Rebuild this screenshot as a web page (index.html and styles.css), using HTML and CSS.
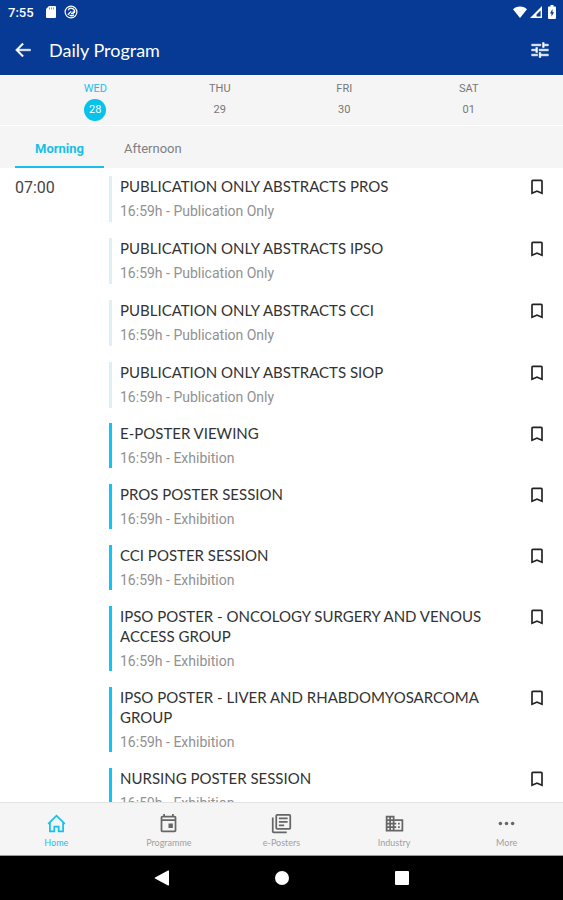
FILE: index.html
```html
<!DOCTYPE html>
<html lang="en">
<head>
  <meta charset="UTF-8" />
  <meta name="viewport" content="width=device-width, initial-scale=1.0"/>
  <title>Daily Program</title>
  <link rel="stylesheet" href="styles.css">
</head>
<body>

  <!-- shared bookmark icon -->
  <svg class="defs" aria-hidden="true">
    <symbol id="bookmark" viewBox="0 0 24 24">
      <path fill="currentColor" d="M17 3H7c-1.100 0-2 .9-2 2v16l7-3 7 3V5c0-1.100-.9-2-2-2zm0 15l-5-2.180L7 18V5h10v13z"/>
    </symbol>
  </svg>

  <header class="header">
    <div class="status-bar">
      <span class="clock">7:55</span>
      <svg class="status-icon" viewBox="0 0 14 14"><path fill="#fff" d="M5 1h6a1 1 0 0 1 1 1v10a1 1 0 0 1-1 1H3a1 1 0 0 1-1-1V4z"/><path stroke="#063a94" stroke-width="1" d="M5.500 2.500v2M7.500 2.500v2M9.500 2.500v2" opacity=".5"/></svg>
      <svg class="status-icon" viewBox="0 0 14 14" fill="none" stroke="#fff"><circle cx="7" cy="7" r="5.900" stroke-width="1.200"/><path stroke-width="1.300" d="M3.800 9.800l3.400-3.400M4.200 5.200A3.300 3.300 0 0 1 10.200 8M10 10A4 4 0 0 1 5.500 10M7 8.500h2.200V6.200"/></svg>
      <span class="spacer"></span>
      <svg class="status-icon" viewBox="0 0 14 14"><path fill="#fff" d="M7 13L0 4.300C1.500 2.800 4 1.600 7 1.600s5.500 1.200 7 2.700z"/></svg>
      <svg class="status-icon" viewBox="0 0 14 14"><path fill="#fff" fill-rule="evenodd" d="M13 1v12H1zM11.600 5.500L7.500 9.500v2h4.100z"/></svg>
      <svg class="status-icon" viewBox="0 0 14 14"><path fill="#fff" fill-rule="evenodd" d="M5.500 0h3v1.500H10a1 1 0 0 1 1 1V13a1 1 0 0 1-1 1H4a1 1 0 0 1-1-1V2.500a1 1 0 0 1 1-1h1.500zM7.500 4L5 8.500h1.500V11.500L9 7.200H7.500z"/></svg>
    </div>
    <div class="app-bar">
      <button class="icon-btn" aria-label="Back">
        <svg class="icon" viewBox="0 0 24 24"><path fill="currentColor" stroke="currentColor" stroke-width=".5" d="M21 11H6.830l5.890-5.890L11.300 3.700l-8.300 8.300 8.300 8.300 1.410-1.410L6.830 13H21v-2z"/></svg>
      </button>
      <h1 class="title">Daily Program</h1>
      <button class="icon-btn" aria-label="Filter">
        <svg class="icon" viewBox="0 0 24 24"><path fill="currentColor" stroke="currentColor" stroke-width=".6" d="M2 17v2h7v-2H2zM2 5v2h11V5H2zm11 16v-2h9v-2h-9v-2h-2v6h2zM7 9v2H2v2h5v2h2V9H7zm15 4v-2H11v2h11zm-7-4h2V7h5V5h-5V3h-2v6z"/></svg>
      </button>
    </div>
  </header>

  <div class="days">
    <button class="day active">WED <span class="date">28</span></button>
    <button class="day">THU <span class="date">29</span></button>
    <button class="day">FRI <span class="date">30</span></button>
    <button class="day">SAT <span class="date">01</span></button>
  </div>

  <div class="tabs">
    <button class="tab active">Morning</button>
    <button class="tab">Afternoon</button>
  </div>

  <main class="schedule">
    <div class="time">07:00</div>
    <div class="sessions">
      <div class="group publication">
        <div class="session">
          <div class="info"><h2>PUBLICATION ONLY ABSTRACTS PROS</h2><p>16:59h - Publication Only</p></div>
          <button class="bookmark" aria-label="Bookmark"><svg class="icon"><use href="#bookmark"/></svg></button>
        </div>
        <div class="session">
          <div class="info"><h2>PUBLICATION ONLY ABSTRACTS IPSO</h2><p>16:59h - Publication Only</p></div>
          <button class="bookmark" aria-label="Bookmark"><svg class="icon"><use href="#bookmark"/></svg></button>
        </div>
        <div class="session">
          <div class="info"><h2>PUBLICATION ONLY ABSTRACTS CCI</h2><p>16:59h - Publication Only</p></div>
          <button class="bookmark" aria-label="Bookmark"><svg class="icon"><use href="#bookmark"/></svg></button>
        </div>
        <div class="session">
          <div class="info"><h2>PUBLICATION ONLY ABSTRACTS SIOP</h2><p>16:59h - Publication Only</p></div>
          <button class="bookmark" aria-label="Bookmark"><svg class="icon"><use href="#bookmark"/></svg></button>
        </div>
      </div>
      <div class="group exhibition">
        <div class="session">
          <div class="info"><h2>E-POSTER VIEWING</h2><p>16:59h - Exhibition</p></div>
          <button class="bookmark" aria-label="Bookmark"><svg class="icon"><use href="#bookmark"/></svg></button>
        </div>
        <div class="session">
          <div class="info"><h2>PROS POSTER SESSION</h2><p>16:59h - Exhibition</p></div>
          <button class="bookmark" aria-label="Bookmark"><svg class="icon"><use href="#bookmark"/></svg></button>
        </div>
        <div class="session">
          <div class="info"><h2>CCI POSTER SESSION</h2><p>16:59h - Exhibition</p></div>
          <button class="bookmark" aria-label="Bookmark"><svg class="icon"><use href="#bookmark"/></svg></button>
        </div>
        <div class="session">
          <div class="info"><h2>IPSO POSTER - ONCOLOGY SURGERY AND VENOUS ACCESS GROUP</h2><p>16:59h - Exhibition</p></div>
          <button class="bookmark" aria-label="Bookmark"><svg class="icon"><use href="#bookmark"/></svg></button>
        </div>
        <div class="session">
          <div class="info"><h2>IPSO POSTER - LIVER AND RHABDOMYOSARCOMA GROUP</h2><p>16:59h - Exhibition</p></div>
          <button class="bookmark" aria-label="Bookmark"><svg class="icon"><use href="#bookmark"/></svg></button>
        </div>
        <div class="session">
          <div class="info"><h2>NURSING POSTER SESSION</h2><p>16:59h - Exhibition</p></div>
          <button class="bookmark" aria-label="Bookmark"><svg class="icon"><use href="#bookmark"/></svg></button>
        </div>
      </div>
    </div>
  </main>

  <nav class="bottom-nav">
    <a class="nav-item active" href="#home">
      <svg class="nav-icon" viewBox="0 0 24 24" fill="none" stroke="currentColor" stroke-width="2"><path d="M2.500 12.500L12 3l9.500 9.500M4.500 11v10h5v-5.500h5V21h5V11"/></svg>
      Home
    </a>
    <a class="nav-item" href="#programme">
      <svg class="nav-icon" viewBox="0 0 24 24"><path fill="currentColor" d="M19 3h-1V1h-2v2H8V1H6v2H5c-1.100 0-2 .9-2 2v15c0 1.100.9 2 2 2h14c1.100 0 2-.9 2-2V5c0-1.100-.9-2-2-2zm0 17H5V9h14v11zm0-13H5V5h14v2zm-7 5h5v5h-5z"/></svg>
      Programme
    </a>
    <a class="nav-item" href="#posters">
      <svg class="nav-icon" viewBox="0 0 24 24" fill="none" stroke="currentColor" stroke-width="2"><rect x="6" y="2" width="16" height="16" rx="1"/><path d="M9 6h10M9 10h10M9 14h6M2 5v16a1 1 0 0 0 1 1h15"/></svg>
      e-Posters
    </a>
    <a class="nav-item" href="#industry">
      <svg class="nav-icon" viewBox="0 0 24 24"><path fill="currentColor" d="M12 7V3H2v18h20V7H12zM6 19H4v-2h2v2zm0-4H4v-2h2v2zm0-4H4V9h2v2zm0-4H4V5h2v2zm4 12H8v-2h2v2zm0-4H8v-2h2v2zm0-4H8V9h2v2zm0-4H8V5h2v2zm10 12h-8v-2h2v-2h-2v-2h2v-2h-2V9h8v10zm-2-8h-2v2h2v-2zm0 4h-2v2h2v-2z"/></svg>
      Industry
    </a>
    <a class="nav-item" href="#more">
      <svg class="nav-icon" viewBox="0 0 24 24" fill="currentColor"><circle cx="5" cy="12" r="2"/><circle cx="12" cy="12" r="2"/><circle cx="19" cy="12" r="2"/></svg>
      More
    </a>
  </nav>

  <div class="system-nav">
    <button class="system-btn" aria-label="System back"><svg viewBox="0 0 16 16"><path fill="#fff" d="M15 1v14a.6.6 0 0 1-1 .4L1 8.600a.7.7 0 0 1 0-1.200L14 .6a.6.6 0 0 1 1 .4z"/></svg></button>
    <button class="system-btn" aria-label="System home"><svg viewBox="0 0 16 16"><circle cx="8" cy="8" r="7" fill="#fff"/></svg></button>
    <button class="system-btn" aria-label="Recent apps"><svg viewBox="0 0 16 16"><rect x="1" y="1" width="14" height="14" rx="1" fill="#fff"/></svg></button>
  </div>

</body>
</html>
```
FILE: styles.css
```css
* {
  box-sizing: border-box;
}

body {
  margin: 0;
  height: 100vh;
  display: flex;
  flex-direction: column;
  font-family: Roboto, sans-serif;
  background-color: #fff;
  color: #333;
}

button {
  padding: 0;
  border: none;
  background: none;
  color: inherit;
  font: inherit;
  cursor: pointer;
}

svg {
  display: block;
}

.defs {
  display: none;
}

.icon {
  width: 20px;
  height: 20px;
}

/* header */
.header {
  background-color: #063a94;
  color: #fff;
}

.status-bar {
  display: flex;
  align-items: center;
  gap: 6px;
  height: 24px;
  padding: 0 4px 0 8px;
}

.clock {
  font-size: 13px;
  font-weight: 500;
  margin-right: 4px;
}

.status-icon {
  width: 14px;
  height: 14px;
}

.spacer {
  flex: 1;
}

.spacer ~ .status-icon {
  margin-left: -4px;
}

.app-bar {
  display: flex;
  align-items: center;
  height: 51px;
  padding: 0 13px;
}

.title {
  flex: 1;
  margin: 0 0 0 16px;
  font-family: Lato, sans-serif;
  font-size: 18px;
  font-weight: 400;
}

/* day picker */
.days {
  display: flex;
  padding: 5px 32px 4px 33px;
  margin-top: 1px;
  background-color: #f5f5f5;
  border-bottom: 1px solid #fff;
}

.day {
  flex: 1;
  display: flex;
  flex-direction: column;
  align-items: center;
  gap: 2px;
  font-size: 11px;
  line-height: 16px;
  color: #777;
}

.date {
  width: 22px;
  height: 22px;
  line-height: 22px;
  border-radius: 50%;
}

.day.active {
  color: #18c1ea;
}

.day.active .date {
  background-color: #07c2ea;
  color: #fff;
}

/* tabs */
.tabs {
  display: flex;
  padding: 0 15px;
  background-color: #f5f5f5;
}

.tab {
  height: 42px;
  padding: 9px 20px 4px;
  font-size: 13px;
  color: #808080;
  border-bottom: 2px solid transparent;
}

.tab.active {
  color: #18bfe6;
  font-weight: 700;
  border-bottom-color: #18c1ea;
}

/* schedule */
.schedule {
  flex: 1;
  min-height: 0;
  display: flex;
  padding: 8px 16px 0 15px;
  overflow-y: auto;
  scrollbar-width: none;
}

.time {
  width: 94px;
  font-size: 16px;
  line-height: 24px;
  color: #444;
}

.sessions {
  flex: 1;
}

.group {
  display: flex;
  flex-direction: column;
}

.publication {
  gap: 16px;
  margin-bottom: 15px;
}

.exhibition {
  gap: 16px;
}

.session {
  display: flex;
  align-items: flex-start;
  border-left: 3px solid #0fc4f8;
}

.publication .session {
  border-left-color: #def0f6;
}

.info {
  flex: 1;
  padding: 0 20px 0 8px;
}

.info h2 {
  margin: 0 0 5px;
  font-family: Lato, sans-serif;
  font-size: 15px;
  font-weight: 400;
  line-height: 20px;
  color: #333;
}

.info p {
  margin: 0;
  font-size: 14px;
  line-height: 20px;
  color: #919191;
}

.publication .info {
  padding-bottom: 1px;
}

.bookmark {
  padding-top: 1px;
  color: #222;
}

/* bottom navigation */
.bottom-nav {
  display: flex;
  height: 54px;
  background-color: #f5f5f5;
  border-top: 1px solid #e2e2e2;
  border-bottom: 1px solid #999;
}

.nav-item {
  flex: 1;
  display: flex;
  flex-direction: column;
  align-items: center;
  gap: 3px;
  padding-top: 10px;
  font-family: Lato, sans-serif;
  font-size: 9px;
  line-height: 12px;
  color: #a0a0a0;
  text-decoration: none;
}

.nav-icon {
  width: 21px;
  height: 21px;
  color: #666;
}

.nav-item.active,
.nav-item.active .nav-icon {
  color: #18c1ea;
}

.system-nav {
  display: flex;
  justify-content: center;
  gap: 104px;
  height: 44px;
  background-color: #000;
}

.system-btn {
  width: 16px;
}
```
